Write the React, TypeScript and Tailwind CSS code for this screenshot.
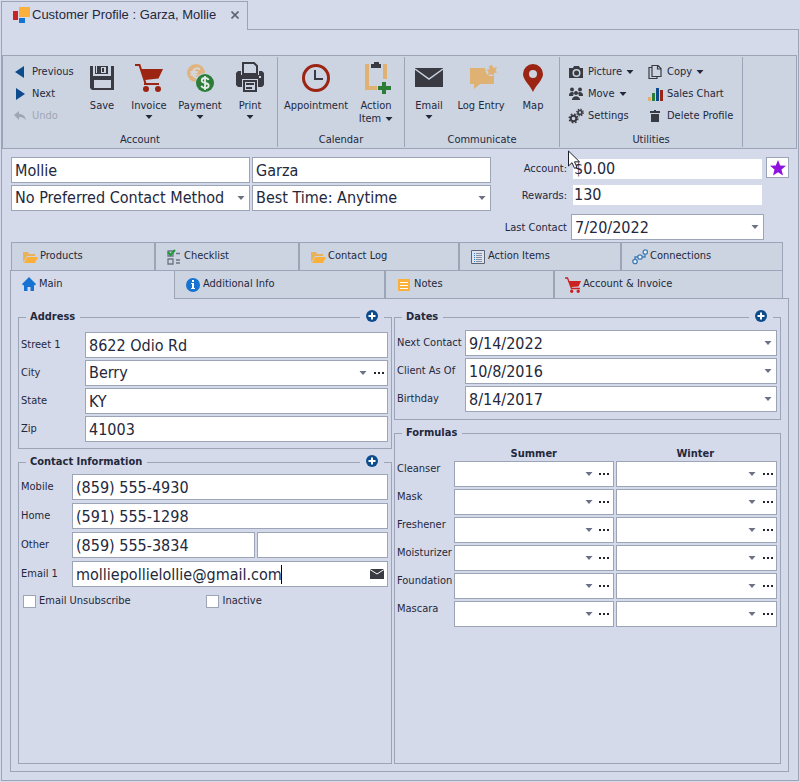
import React, { useState } from "react";

const Caret: React.FC<{ className?: string }> = ({ className = "" }) => (
  <svg
    viewBox="0 0 8 4"
    className={`pointer-events-none h-1 w-2 shrink-0 ${className}`}
    fill="currentColor"
    aria-hidden="true"
  >
    <path d="M0.5 0h7L4 4z" />
  </svg>
);

const Dots = () => (
  <svg viewBox="0 0 11 2" className="h-[2px] w-[11px]" fill="#23252e">
    <path d="M0 0h2v2H0zM4 0h2v2H4zM8 0h2v2H8z" />
  </svg>
);

/* ---------- large ribbon icons, 32 x 32 ---------- */

const Big: React.FC<{ children: React.ReactNode }> = ({ children }) => (
  <svg viewBox="0 0 32 32" className="size-8 shrink-0" aria-hidden="true">
    {children}
  </svg>
);

const SaveIcon = () => (
  <Big>
    <path fill="#3a3b42" d="M4 4h3v10h18V4h3v24H6l-2-2z" />
    <path fill="#3a3b42" d="M9 4h13v8H9z" />
    <path fill="#ccd4e1" d="M10 4h1v7h-1zM15 5h5v6h-5zM8 18h17v8H8z" />
    <path fill="#3a3b42" d="M16 6h2v4h-2z" />
  </Big>
);

const CartIcon = () => (
  <Big>
    <path d="M2 3h4.500l6 18.500" stroke="#9c2412" strokeWidth="2" fill="none" />
    <path
      fill="#9c2412"
      d="M8 7h22l-4.500 9.500L12 18zM11 21h15v2H11zM10 27a3 3 0 1 1 6 0 3 3 0 0 1-6 0zM22 27a3 3 0 1 1 6 0 3 3 0 0 1-6 0z"
    />
  </Big>
);

const PaymentIcon = () => (
  <Big>
    <circle cx="12" cy="11" r="9" fill="#dfb480" />
    <path
      d="M16 7.500a4.500 4.500 0 1 0 0 7M6.500 10h7M6.500 12.500h7"
      stroke="#d6d8df"
      strokeWidth="1.800"
      fill="none"
    />
    <circle cx="21" cy="21" r="10" fill="#ccd4e1" />
    <circle cx="21" cy="21" r="9" fill="#2c7d38" />
    <path
      d="M24.500 18c-.5-1.500-1.800-2-3.500-2-2 0-3.300 1-3.300 2.500 0 3.500 7 1.500 7 5 0 1.700-1.500 2.500-3.500 2.500s-3.400-.7-3.900-2.200M21 14v14"
      stroke="#e6ecec"
      strokeWidth="1.800"
      fill="none"
    />
  </Big>
);

const PrintIcon = () => (
  <Big>
    <path fill="#3a3b42" d="M2 11l2-2h3v4h18V9h3l2 2v12l-2 2H4l-2-2z" />
    <path fill="#ccd4e1" d="M25 14h2v2h-2zM8 17h16v14H8z" />
    <path fill="none" stroke="#3a3b42" strokeWidth="2" d="M9 12V1h11l3 3v8zM10 19h12v10H10z" />
    <path fill="#3a3b42" d="M12 21h8v2h-8zM12 25h6v2h-6z" />
  </Big>
);

const ClockIcon = () => (
  <Big>
    <circle cx="16" cy="16" r="12.500" stroke="#9c2412" strokeWidth="3" fill="none" />
    <path d="M15 8v9h8" stroke="#3a3b42" strokeWidth="2" fill="none" />
  </Big>
);

const ClipboardIcon = () => (
  <Big>
    <path fill="#dfb172" d="M5 2h4v22h8v4H5zM23 2h4v15h-4z" />
    <path fill="#3a3b42" d="M11 2h3V0h5v2h2v4H11z" />
    <path fill="#2c7d38" d="M22 20h4v4h5v4h-5v4h-4v-4h-4v-4h4z" />
  </Big>
);

const MailIcon = () => (
  <Big>
    <path fill="#3a3b42" d="M2 6h28v19H2z" />
    <path d="M2 7l14 10L30 7" stroke="#ccd4e1" strokeWidth="1.500" fill="none" />
  </Big>
);

const LogIcon = () => (
  <Big>
    <path fill="#dfb172" d="M5 6h15l1 5 3 3h5v8H15l-6 5v-5H5z" />
    <path
      fill="#dfb172"
      d="M27 3l1.500 3 3.500-1-1.500 3L32 10.500l-3 .5-.5 3L26 12l-3 1.500.5-3.500-2-2 3-1-.5-3z"
    />
  </Big>
);

const PinIcon = () => (
  <Big>
    <path
      fill="#9c2412"
      fillRule="evenodd"
      d="M16 2a10 10 0 0 1 10 10c0 6-7 11-10 18C13 23 6 18 6 12A10 10 0 0 1 16 2zm0 6a4 4 0 1 0 0 8 4 4 0 0 0 0-8z"
    />
  </Big>
);

/* ---------- small icons, 16 x 16 ---------- */

const Small: React.FC<{ children: React.ReactNode }> = ({ children }) => (
  <svg viewBox="0 0 16 16" className="size-4 shrink-0" aria-hidden="true">
    {children}
  </svg>
);

const PreviousIcon = () => (
  <Small>
    <path fill="#0d4c8c" d="M3 8l9-6v12z" />
  </Small>
);

const NextIcon = () => (
  <Small>
    <path fill="#0d4c8c" d="M13 8L4 2v12z" />
  </Small>
);

const UndoIcon = () => (
  <Small>
    <path fill="#9fa6b5" d="M2 7l5-4v3c4 0 6 2 7 6-2-2-4-3-7-3v3z" />
  </Small>
);

const CameraIcon = () => (
  <Small>
    <path
      fill="#3a3b42"
      fillRule="evenodd"
      d="M1 4h4l1-2h5l1 2h3v10H1zM8.500 5a4 4 0 1 0 0 8 4 4 0 0 0 0-8z"
    />
    <circle cx="8.500" cy="9" r="2.500" fill="#3a3b42" />
  </Small>
);

const PeopleIcon = () => (
  <Small>
    <g fill="#3a3b42">
      <circle cx="4" cy="3.500" r="2" />
      <circle cx="12" cy="3.500" r="2" />
      <circle cx="8" cy="7" r="2" />
      <path d="M1 9c0-3 4-4 5-2l-1 3H1zM15 9c0-3-4-4-5-2l1 3h4zM4 14c0-5 8-5 8 0z" />
    </g>
  </Small>
);

const GearsIcon = () => (
  <Small>
    <g fill="none" stroke="#3a3b42">
      <circle cx="5.500" cy="10.500" r="2.800" strokeWidth="2" />
      <circle cx="5.500" cy="10.500" r="4.300" strokeWidth="1.500" strokeDasharray="1.700 1.680" />
      <circle cx="12" cy="4.500" r="2" strokeWidth="1.700" />
      <circle cx="12" cy="4.500" r="3.300" strokeWidth="1.300" strokeDasharray="1.300 1.290" />
    </g>
  </Small>
);

const CopyIcon = () => (
  <Small>
    <g fill="none" stroke="#3a3b42" strokeWidth="1.200">
      <path d="M5 12.500V1.500h6l3 3v8zM10.500 1.500V5H14" />
      <path d="M5 3.500H2v11h8v-2" />
    </g>
  </Small>
);

const ChartIcon = () => (
  <Small>
    <path fill="#dfb172" d="M1 11h3v4H1z" />
    <path fill="#2c7d38" d="M5 7h3v8H5z" />
    <path fill="#0d4c8c" d="M9 2h3v13H9z" />
    <path fill="#9c2412" d="M13 4h3v11h-3z" />
  </Small>
);

const TrashIcon = () => (
  <Small>
    <path fill="#3a3b42" d="M3 3h4V2h2v1h4v2H3zM4 6h8v8H4z" />
  </Small>
);

const FolderIcon = () => (
  <Small>
    <path fill="#f1a62f" d="M1 3h5l1 2h6v2H5l-3 5-1 1z" opacity=".75" />
    <path fill="#fbb03b" d="M5 8h11l-3 6H2z" />
  </Small>
);

const ChecklistIcon = () => (
  <Small>
    <path
      fill="none"
      stroke="#6c7282"
      strokeWidth="1.300"
      d="M2 2h5v5H2zM2 10h5v5H2zM10 4.500h4M10 11h4M10 14h4"
    />
    <path fill="none" stroke="#1f9a3c" strokeWidth="2" d="M2 3l2.500 3L9 1" />
  </Small>
);

const ListIcon = () => (
  <Small>
    <path fill="#dfe3ee" stroke="#5c6477" d="M1.500 1.500h13v13h-13z" />
    <path stroke="#2c7fd0" d="M4 4.500h1M4 6.500h1M4 8.500h1M4 10.500h1M4 12.500h1" />
    <path stroke="#878fa3" d="M6 4.500h6M6 6.500h6M6 8.500h6M6 10.500h6M6 12.500h6" />
  </Small>
);

const ConnectionsIcon = () => (
  <Small>
    <g fill="#eef3fa" stroke="#3f7cb4" strokeWidth="1.300">
      <path fill="none" d="M3 12V8h5M9 8h4V3" />
      <circle cx="3" cy="12.500" r="2.200" />
      <circle cx="8" cy="8" r="2.200" />
      <circle cx="13.300" cy="3" r="2.200" />
    </g>
  </Small>
);

const HomeIcon = () => (
  <Small>
    <path fill="#1673d1" d="M8 1l7 7-1 1.500-1-.5v6H9.500v-4h-3v4H3V9l-1 .5L1 8z" />
  </Small>
);

const InfoIcon = () => (
  <Small>
    <circle cx="8" cy="8" r="7" fill="#1673d1" />
    <path fill="#fff" d="M7 3h2v2H7zM6 6h3v5h1v1H6v-1h1V7H6z" />
  </Small>
);

const NotesIcon = () => (
  <Small>
    <path fill="#fbb03b" d="M2 2h12v12H2z" />
    <path stroke="#fff" d="M4 5.500h8M4 8.500h8M4 11.500h8" />
  </Small>
);

const SmallCartIcon = () => (
  <Small>
    <path d="M0 1h2.500l4 10.500H15" stroke="#cc2222" strokeWidth="1.300" fill="none" />
    <path
      fill="#cc2222"
      d="M3.500 4H16l-2.500 5.500L6 10zM5 14.300a1.700 1.700 0 1 1 3.400 0 1.700 1.700 0 0 1-3.400 0zM11.500 14.300a1.700 1.700 0 1 1 3.400 0 1.700 1.700 0 0 1-3.400 0z"
    />
  </Small>
);

/* ---------- ribbon ---------- */

type ButtonProps = {
  label: string;
  icon: React.ReactNode;
  menu?: boolean;
  disabled?: boolean;
  className?: string;
};

const SmallButton: React.FC<ButtonProps> = ({ label, icon, menu, disabled }) => (
  <button
    type="button"
    disabled={disabled}
    className="flex h-[22px] items-center gap-1 whitespace-nowrap disabled:text-[#9fa6b5]"
  >
    {icon}
    <span>{label}</span>
    {menu && <Caret />}
  </button>
);

const LargeButton: React.FC<ButtonProps> = ({ label, icon, menu, className = "" }) => (
  <button type="button" className={`flex flex-col items-center ${className}`}>
    {icon}
    <span className="mt-[5px] leading-[13px]">{label}</span>
    {menu && <Caret className="mt-[3px]" />}
  </button>
);

const RibbonGroup: React.FC<{
  title: string;
  className: string;
  children: React.ReactNode;
}> = ({ title, className, children }) => (
  <section
    className={`my-px flex shrink-0 flex-col border-r border-[#9ca4b8] pt-[5px] ${className}`}
  >
    <div className="flex h-[71px]">{children}</div>
    <h2 className="text-center leading-[14px]">{title}</h2>
  </section>
);

const Ribbon = () => (
  <div className="mr-px flex h-[94px] border border-[#9ca4b8] bg-[#ccd4e1]">
    <RibbonGroup title="Account" className="w-[275px]">
      <div className="-mt-px w-[70px] pl-[9px]">
        <SmallButton label="Previous" icon={<PreviousIcon />} />
        <SmallButton label="Next" icon={<NextIcon />} />
        <SmallButton label="Undo" icon={<UndoIcon />} disabled />
      </div>
      <div className="flex flex-1 pl-[7px]">
        <LargeButton label="Save" icon={<SaveIcon />} className="w-11" />
        <LargeButton label="Invoice" icon={<CartIcon />} menu className="w-[50px]" />
        <LargeButton label="Payment" icon={<PaymentIcon />} menu className="w-[52px]" />
        <LargeButton label="Print" icon={<PrintIcon />} menu className="w-12" />
      </div>
    </RibbonGroup>
    <RibbonGroup title="Calendar" className="w-[127px]">
      <LargeButton label="Appointment" icon={<ClockIcon />} className="w-[76px]" />
      <button type="button" className="flex w-11 flex-col items-center">
        <ClipboardIcon />
        <span className="mt-[5px] leading-[13px]">Action</span>
        <span className="flex items-center gap-1 leading-[13px]">
          Item <Caret />
        </span>
      </button>
    </RibbonGroup>
    <RibbonGroup title="Communicate" className="w-[155px]">
      <LargeButton label="Email" icon={<MailIcon />} menu className="w-12" />
      <LargeButton label="Log Entry" icon={<LogIcon />} className="w-14" />
      <LargeButton label="Map" icon={<PinIcon />} className="w-12" />
    </RibbonGroup>
    <RibbonGroup title="Utilities" className="w-[183px]">
      <div className="-mt-px w-[79px] pl-2">
        <SmallButton label="Picture" icon={<CameraIcon />} menu />
        <SmallButton label="Move" icon={<PeopleIcon />} menu />
        <SmallButton label="Settings" icon={<GearsIcon />} />
      </div>
      <div className="-mt-px pl-2">
        <SmallButton label="Copy" icon={<CopyIcon />} menu />
        <SmallButton label="Sales Chart" icon={<ChartIcon />} />
        <SmallButton label="Delete Profile" icon={<TrashIcon />} />
      </div>
    </RibbonGroup>
  </div>
);

/* ---------- fields ---------- */

const box =
  "flex h-[26px] min-w-0 items-center border border-[#9ca4b8] bg-white text-[16px]";
const control = "h-full w-full min-w-0 flex-1 bg-transparent pl-[3px] outline-none";

const TextField: React.FC<{
  id: string;
  value: string;
  label?: string;
  children?: React.ReactNode;
}> = ({ id, value, label, children }) => (
  <div className={`relative ${box}`}>
    <input id={id} aria-label={label} defaultValue={value} className={control} />
    {children}
  </div>
);

const DateField: React.FC<{ id: string; value: string }> = ({ id, value }) => (
  <div className={box}>
    <input id={id} defaultValue={value} className={control} />
    <button
      type="button"
      aria-label="Open calendar"
      className="flex h-full w-4 items-center justify-center text-[#6b7185]"
    >
      <Caret />
    </button>
  </div>
);

const SelectField: React.FC<{
  id?: string;
  label?: string;
  value: string;
  more?: boolean;
}> = ({ id, label, value, more }) => (
  <div className={box}>
    <div className="relative flex h-full min-w-0 flex-1 items-center">
      <select id={id} aria-label={label} className={`appearance-none ${control}`}>
        <option>{value}</option>
      </select>
      <Caret className="absolute right-1 text-[#6b7185]" />
    </div>
    {more && (
      <button
        type="button"
        aria-label="More"
        className="flex h-full w-4 items-center justify-center"
      >
        <Dots />
      </button>
    )}
  </div>
);

const Group: React.FC<{
  title: string;
  add?: boolean;
  className?: string;
  children: React.ReactNode;
}> = ({ title, add, className = "", children }) => (
  <fieldset
    className={`relative min-w-0 border border-[#9ca4b8] pr-[3px] pl-0.5 ${className}`}
  >
    <legend className="ml-[5px] h-[14px] px-1 pr-[5px] font-bold leading-[14px]">
      {title}
    </legend>
    {add && (
      <button
        type="button"
        aria-label={`Add to ${title}`}
        className="absolute -top-[14px] right-[7px] bg-[#d5daea] px-1.5"
      >
        <svg viewBox="0 0 12 12" className="size-3">
          <circle cx="6" cy="6" r="6" fill="#0d4c8c" />
          <path d="M6 2.500v7M2.500 6h7" stroke="#fff" strokeWidth="2" />
        </svg>
      </button>
    )}
    {children}
  </fieldset>
);

/* ---------- tabs ---------- */

const backTabs = [
  { name: "Products", icon: <FolderIcon /> },
  { name: "Checklist", icon: <ChecklistIcon /> },
  { name: "Contact Log", icon: <FolderIcon /> },
  { name: "Action Items", icon: <ListIcon /> },
  { name: "Connections", icon: <ConnectionsIcon /> },
];

const frontTabs = [
  { name: "Additional Info", icon: <InfoIcon /> },
  { name: "Notes", icon: <NotesIcon /> },
  { name: "Account & Invoice", icon: <SmallCartIcon /> },
];

const tab =
  "flex min-w-0 items-center gap-0.5 whitespace-nowrap border-t border-[#9ca4b8] pl-2.5";

const Tabs = () => (
  <div role="tablist">
    <div className="mr-[6px] ml-px grid h-7 grid-cols-[144fr_144fr_160fr_162fr_162fr]">
      {backTabs.map(({ name, icon }) => (
        <button
          key={name}
          role="tab"
          type="button"
          aria-selected={false}
          className={`${tab} border-x bg-[#ccd4e1]`}
        >
          {icon}
          {name}
        </button>
      ))}
    </div>
    <div className="flex h-[29px]">
      <div className="grid flex-1 grid-cols-[164fr_211fr_169fr_229fr]">
        <button
          role="tab"
          type="button"
          aria-selected
          className={`${tab} border-l pb-0.5`}
        >
          <HomeIcon />
          Main
        </button>
        {frontTabs.map(({ name, icon }) => (
          <button
            key={name}
            role="tab"
            type="button"
            aria-selected={false}
            className={`${tab} border-x border-b bg-[#ccd4e1]`}
          >
            {icon}
            {name}
          </button>
        ))}
      </div>
      <div className="w-[6px] border-b border-[#9ca4b8]" />
    </div>
  </div>
);

const formulas = ["Cleanser", "Mask", "Freshener", "Moisturizer", "Foundation", "Mascara"];

const Pointer = () => (
  <svg
    viewBox="0 0 12 19"
    className="pointer-events-none absolute -top-[7px] -right-[11px] z-10 h-[19px] w-3"
  >
    <path
      d="M.5 1v15l3.500-3.300 2.500 5.600 2.500-1-2.500-5.500h5z"
      fill="#fff"
      stroke="#1c1f2a"
    />
  </svg>
);

export default function App() {
  const [unsubscribed, setUnsubscribed] = useState(false);
  const [inactive, setInactive] = useState(false);

  return (
    <div className="flex min-h-screen min-w-[780px] flex-col bg-[#d5daea] p-px font-['DejaVu_Sans_Condensed','DejaVu_Sans',sans-serif] text-[11px] text-[#23283c]">
      <header className="flex h-[29px]">
        <div className="flex w-[247px] items-center border-x border-t border-[#9ca4b8] pb-0.5 pl-2.5">
          <svg viewBox="0 0 18 18" className="size-[18px]" aria-hidden="true">
            <path fill="#cc2222" d="M1 5h5v9H1z" />
            <path fill="#fbb03b" d="M7 1h11v10H7z" />
            <path fill="#1673d1" d="M7 12h6v5H7z" />
          </svg>
          <h1 className="ml-0.5 whitespace-nowrap font-['Liberation_Sans',sans-serif] text-[13px]">
            Customer Profile : Garza, Mollie
          </h1>
          <button type="button" aria-label="Close" className="mr-2 ml-auto">
            <svg viewBox="0 0 8 8" className="size-2" stroke="#5c6477" strokeWidth="1.600">
              <path d="M.5.5l7 7M7.500.5l-7 7" />
            </svg>
          </button>
        </div>
        <div className="flex-1 border-b border-[#9ca4b8]" />
      </header>

      <main className="flex flex-1 flex-col border-x border-b border-[#9ca4b8] pt-[25px]">
        <Ribbon />

        <div className="flex h-[93px] justify-between pt-2 pl-[9px]">
          <div className="grid h-[54px] flex-1 grid-cols-2 gap-x-0.5 gap-y-0.5">
            <TextField id="first" label="First name" value="Mollie" />
            <TextField id="last" label="Last name" value="Garza" />
            <SelectField label="Preferred contact method" value="No Preferred Contact Method" />
            <SelectField label="Best time" value="Best Time: Anytime" />
          </div>
          <div className="grid w-[307px] grid-cols-[78px_193px_23px] content-start gap-x-0.5">
            <label htmlFor="account" className="relative h-7 pt-1 pr-0.5 text-right">
              Account:
              <Pointer />
            </label>
            <input
              id="account"
              defaultValue="$0.00"
              className="mt-0.5 mr-0.5 ml-0.5 h-5 min-w-0 bg-white pl-px text-[16px] outline-none"
            />
            <button
              type="button"
              aria-label="Favorite"
              className="flex h-[21px] w-[23px] items-center justify-center border border-[#9ca4b8] bg-white"
            >
              <svg viewBox="0 0 16 16" className="size-4" fill="#9010e0">
                <path d="M8 0l2.200 5.500 5.800.3-4.500 3.800L13 15.500l-5-3.300-5 3.300 1.500-5.900L0 5.800l5.800-.3z" />
              </svg>
            </button>
            <label htmlFor="rewards" className="h-[29px] pt-[3px] pr-0.5 text-right">
              Rewards:
            </label>
            <input
              id="rewards"
              defaultValue="130"
              className="mr-0.5 ml-0.5 h-5 min-w-0 bg-white pl-px text-[16px] outline-none"
            />
            <span />
            <label htmlFor="contacted" className="pt-[6px] pr-0.5 text-right">
              Last Contact
            </label>
            <DateField id="contacted" value="7/20/2022" />
          </div>
        </div>

        <div className="flex flex-1 flex-col pr-[9px] pb-2 pl-2">
          <Tabs />
          <div
            role="tabpanel"
            className="grid flex-1 grid-cols-[374fr_387fr] gap-0.5 border-x border-b border-[#9ca4b8] px-[7px] pt-[11px] pb-[7px]"
          >
            <div className="flex min-w-0 flex-col gap-[6px]">
              <Group title="Address" add className="pb-[6px]">
                <div className="grid grid-cols-[64px_1fr] items-center gap-y-0.5 pt-2">
                  <label htmlFor="street">Street 1</label>
                  <TextField id="street" value="8622 Odio Rd" />
                  <label htmlFor="city">City</label>
                  <SelectField id="city" value="Berry" more />
                  <label htmlFor="state">State</label>
                  <TextField id="state" value="KY" />
                  <label htmlFor="zip">Zip</label>
                  <TextField id="zip" value="41003" />
                </div>
              </Group>

              <Group title="Contact Information" add className="flex-1">
                <div className="grid grid-cols-[51px_1fr] items-center gap-y-[3px] pt-[5px]">
                  <label htmlFor="mobile">Mobile</label>
                  <TextField id="mobile" value="(859) 555-4930" />
                  <label htmlFor="home">Home</label>
                  <TextField id="home" value="(591) 555-1298" />
                  <label htmlFor="other">Other</label>
                  <div className="grid grid-cols-[183fr_131fr] gap-0.5">
                    <TextField id="other" value="(859) 555-3834" />
                    <TextField id="other2" label="Other, second number" value="" />
                  </div>
                  <label htmlFor="email">Email 1</label>
                  <TextField id="email" value="molliepollielollie@gmail.com">
                    <span className="absolute top-[3px] left-[208px] h-[19px] w-px bg-black" />
                    <button type="button" aria-label="Send email" className="px-[3px]">
                      <svg viewBox="0 0 14 10" className="h-2.5 w-3.5">
                        <path fill="#3a3b42" d="M0 0h14v10H0z" />
                        <path d="M0 .5l7 4.500 7-4.500" stroke="#fff" fill="none" />
                      </svg>
                    </button>
                  </TextField>
                </div>
                <div className="mt-[6px] grid grid-cols-[184fr_182fr] pl-0.5">
                  <label className="flex items-center gap-[3px]">
                    <input
                      type="checkbox"
                      checked={unsubscribed}
                      onChange={(e) => setUnsubscribed(e.target.checked)}
                      className="size-[13px] appearance-none border border-[#9ca4b8] bg-white checked:bg-[#0d4c8c]"
                    />
                    Email Unsubscribe
                  </label>
                  <label className="flex items-center gap-[3px]">
                    <input
                      type="checkbox"
                      checked={inactive}
                      onChange={(e) => setInactive(e.target.checked)}
                      className="size-[13px] appearance-none border border-[#9ca4b8] bg-white checked:bg-[#0d4c8c]"
                    />
                    Inactive
                  </label>
                </div>
              </Group>
            </div>

            <div className="flex min-w-0 flex-col gap-[6px]">
              <Group title="Dates" add className="pb-[7px]">
                <div className="grid grid-cols-[68px_1fr] items-center gap-y-0.5 pt-[6px]">
                  <label htmlFor="next">Next Contact</label>
                  <DateField id="next" value="9/14/2022" />
                  <label htmlFor="since">Client As Of</label>
                  <DateField id="since" value="10/8/2016" />
                  <label htmlFor="birthday">Birthday</label>
                  <DateField id="birthday" value="8/14/2017" />
                </div>
              </Group>

              <Group title="Formulas" className="flex-1">
                <table className="w-full table-fixed border-collapse">
                  <colgroup>
                    <col className="w-[15%]" />
                    <col className="w-[42%]" />
                    <col className="w-[43%]" />
                  </colgroup>
                  <thead>
                    <tr className="h-[21px]">
                      <td />
                      <th className="pt-[6px] leading-[14px]">Summer</th>
                      <th className="pt-[6px] leading-[14px]">Winter</th>
                    </tr>
                  </thead>
                  <tbody>
                    {formulas.map((name) => (
                      <tr key={name}>
                        <th scope="row" className="text-left align-top font-normal">
                          {name}
                        </th>
                        <td className="pb-0.5">
                          <SelectField label={`${name}, summer`} value="" more />
                        </td>
                        <td className="pb-0.5 pl-0.5">
                          <SelectField label={`${name}, winter`} value="" more />
                        </td>
                      </tr>
                    ))}
                  </tbody>
                </table>
              </Group>
            </div>
          </div>
        </div>
      </main>
    </div>
  );
}
